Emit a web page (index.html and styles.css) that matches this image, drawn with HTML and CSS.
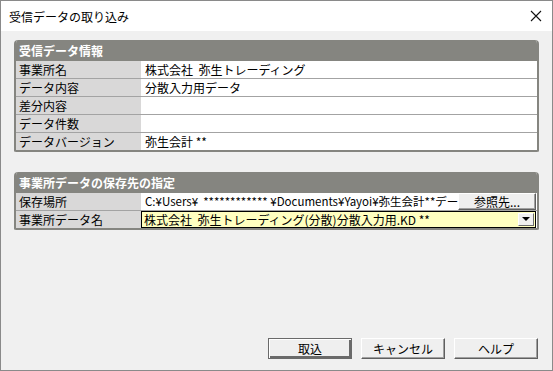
FILE: index.html
```html
<!DOCTYPE html>
<html>
<head>
<meta charset="utf-8">
<link rel="stylesheet" href="styles.css">
</head>
<body>
<div class="window">
  <div class="titlebar">
    <span class="title">受信データの取り込み</span>
    <svg class="close" width="12" height="12" viewBox="0 0 12 12"><path d="M1 1L11 11M11 1L1 11" stroke="#111" stroke-width="1.1"/></svg>
  </div>
  <div class="content">
    <div class="panel">
      <div class="panel-head">受信データ情報</div>
      <div class="row"><div class="label">事業所名</div><div class="value">株式会社&nbsp; 弥生トレーディング</div></div>
      <div class="row"><div class="label">データ内容</div><div class="value">分散入力用データ</div></div>
      <div class="row"><div class="label">差分内容</div><div class="value"></div></div>
      <div class="row"><div class="label">データ件数</div><div class="value"></div></div>
      <div class="row"><div class="label">データバージョン</div><div class="value">弥生会計 **</div></div>
    </div>

    <div class="panel second">
      <div class="panel-head">事業所データの保存先の指定</div>
      <div class="row">
        <div class="label">保存場所</div>
        <div class="value path">
          <span class="path-text">C:¥Users¥&nbsp; ************ ¥Documents¥Yayoi¥弥生会計**データ</span>
          <button class="btn small">参照先...</button>
        </div>
      </div>
      <div class="row">
        <div class="label">事業所データ名</div>
        <div class="value">
          <div class="combo">
            <span class="combo-text">株式会社&nbsp; 弥生トレーディング(分散)分散入力用.KD **</span>
            <span class="combo-btn"><svg width="8" height="5" viewBox="0 0 8 5"><path d="M0 0H8L4 4Z" fill="#000"/></svg></span>
          </div>
        </div>
      </div>
    </div>

    <div class="actions">
      <button class="btn default">取込</button>
      <button class="btn">キャンセル</button>
      <button class="btn">ヘルプ</button>
    </div>
  </div>
</div>
</body>
</html>
```

FILE: styles.css
```css
* {
  box-sizing: border-box;
}

body {
  margin: 0;
  font-family: "Noto Sans CJK JP", "Liberation Sans", sans-serif;
  font-size: 12px;
  color: #000;
}

.window {
  width: 553px;
  height: 371px;
  border: 1px solid #8a8a8a;
  background: #f0f0f0;
  display: flex;
  flex-direction: column;
}

/* title bar */
.titlebar {
  height: 30px;
  background: #fff;
  display: flex;
  align-items: center;
  justify-content: space-between;
  padding: 0 10px 0 8px;
}

.title {
  font-size: 12px;
}

.content {
  flex: 1;
  padding: 9px 13px 11px 13px;
  display: flex;
  flex-direction: column;
}

/* info panels */
.panel {
  border: 2px solid #858580;
  border-top: none;
  border-radius: 4px 4px 2px 2px;
  background: #fff;
  overflow: hidden;
}

.panel.second {
  margin-top: 20px;
}

.panel-head {
  height: 21px;
  background: #858580;
  color: #fff;
  font-weight: bold;
  line-height: 22px;
  padding-left: 3px;
}

.row {
  display: grid;
  grid-template-columns: 125px 1fr;
  height: 18px;
  border-bottom: 1px solid #a3a3a3;
}

.row:last-child {
  height: 17px;
  border-bottom: none;
}

.label {
  background: #d9d8d8;
  padding-left: 3px;
  line-height: 17px;
  white-space: nowrap;
}

.value {
  padding-left: 4px;
  line-height: 17px;
  white-space: nowrap;
  overflow: hidden;
}

.path {
  display: flex;
  padding-right: 1px;
}

.path-text {
  flex: 1;
  overflow: hidden;
  font-size: 11.5px;
}

/* combo box */
.combo {
  margin-left: -4px;
  height: 17px;
  border: 1px solid #000;
  background: #ffffc0;
  display: flex;
  align-items: center;
  padding-left: 2px;
  margin-right: 1px;
}

.combo-text {
  flex: 1;
  line-height: 15px;
}

.combo-btn {
  width: 16px;
  height: 13px;
  margin-right: 1px;
  background: #f0f0f0;
  border: 1px solid;
  border-color: #fff #6d6d6d #6d6d6d #fff;
  display: flex;
  align-items: center;
  justify-content: center;
}

/* buttons */
.btn {
  font-family: inherit;
  font-size: 12px;
  background: #efefef;
  border: 1px solid;
  border-color: #fff #5f5f5f #5f5f5f #fff;
  box-shadow: inset -1px -1px #a0a0a0;
  padding: 0;
  color: #000;
}

.btn.small {
  width: 78px;
  height: 17px;
  line-height: 14px;
}

.actions {
  margin-top: auto;
  display: flex;
  justify-content: flex-end;
  gap: 9px;
  padding-right: 1px;
}

.actions .btn {
  width: 84px;
  height: 21px;
}

.btn.default {
  border-color: #6a6a6a;
  box-shadow: inset 1px 1px #fff, inset -2px -2px #6a6a6a;
}
```
